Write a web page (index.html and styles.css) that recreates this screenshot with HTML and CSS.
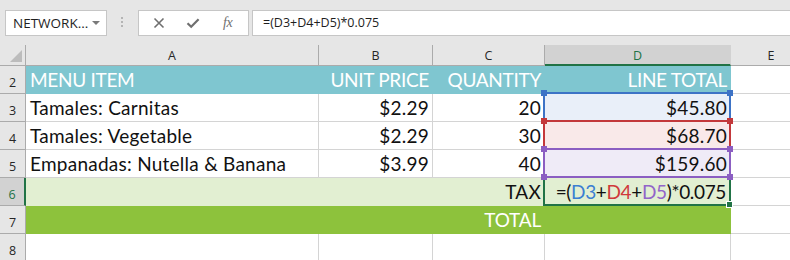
FILE: index.html
```html
<!DOCTYPE html>
<html>
<head>
<meta charset="utf-8">
<link rel="stylesheet" href="styles.css">
</head>
<body>
<div class="toolbar">
  <div class="namebox"><span class="nb-text">NETWORK...</span><span class="caret"></span></div>
  <div class="grip"><i></i><i></i><i></i></div>
  <div class="fbtns">
    <svg class="ico-x" width="12" height="12" viewBox="0 0 12 12"><path d="M1.5 1.5 L10.5 10.5 M10.5 1.5 L1.5 10.5" stroke="#6f6f6f" stroke-width="1.6" fill="none"/></svg>
    <svg class="ico-check" width="14" height="12" viewBox="0 0 14 12"><path d="M1.5 6.2 L5.2 9.8 L12.6 2.2" stroke="#6f6f6f" stroke-width="2.2" fill="none"/></svg>
    <span class="fx">fx</span>
  </div>
  <div class="fbar">=(D3+D4+D5)*0.075</div>
</div>
<div class="sheet">
  <div class="ch corner"><span class="tri"></span></div>
  <div class="ch">A</div>
  <div class="ch">B</div>
  <div class="ch">C</div>
  <div class="ch ch-active">D</div>
  <div class="ch ch-last">E</div>

  <div class="rh">2</div>
  <div class="c teal"><span>MENU ITEM</span></div>
  <div class="c teal r"><span>UNIT PRICE</span></div>
  <div class="c teal r"><span>QUANTITY</span></div>
  <div class="c teal r"><span>LINE TOTAL</span></div>
  <div class="c"></div>

  <div class="rh">3</div>
  <div class="c"><span>Tamales: Carnitas</span></div>
  <div class="c r"><span>$2.29</span></div>
  <div class="c r"><span>20</span></div>
  <div class="c r fill-blue"><span>$45.80</span><div class="rng rng-blue"><b class="tl"></b><b class="tr"></b><b class="bl"></b><b class="br"></b></div></div>
  <div class="c"></div>

  <div class="rh">4</div>
  <div class="c"><span>Tamales: Vegetable</span></div>
  <div class="c r"><span>$2.29</span></div>
  <div class="c r"><span>30</span></div>
  <div class="c r fill-red"><span>$68.70</span><div class="rng rng-red"><b class="tl"></b><b class="tr"></b><b class="bl"></b><b class="br"></b></div></div>
  <div class="c"></div>

  <div class="rh">5</div>
  <div class="c"><span>Empanadas: Nutella &amp; Banana</span></div>
  <div class="c r"><span>$3.99</span></div>
  <div class="c r"><span>40</span></div>
  <div class="c r fill-purple"><span>$159.60</span><div class="rng rng-purple"><b class="tl"></b><b class="tr"></b><b class="bl"></b><b class="br"></b></div></div>
  <div class="c"></div>

  <div class="rh rh-active">6</div>
  <div class="c lgreen"></div>
  <div class="c lgreen"></div>
  <div class="c lgreen r"><span>TAX</span></div>
  <div class="c lgreen r"><span class="formula">=(<em class="fb">D3</em>+<em class="fr">D4</em>+<em class="fp">D5</em>)*0.075</span><div class="active"><b class="handle"></b></div></div>
  <div class="c"></div>

  <div class="rh">7</div>
  <div class="c green"></div>
  <div class="c green"></div>
  <div class="c green r white"><span>TOTAL</span></div>
  <div class="c green"></div>
  <div class="c"></div>

  <div class="rh">8</div>
  <div class="c"></div>
  <div class="c"></div>
  <div class="c"></div>
  <div class="c"></div>
  <div class="c"></div>
</div>
</body>
</html>
```
FILE: styles.css
```css
html, body {
  margin: 0;
  padding: 0;
  background: #ffffff;
}
body {
  width: 790px;
  height: 260px;
  overflow: hidden;
  font-family: "Lato", "Liberation Sans", sans-serif;
}

/* toolbar */
.toolbar {
  height: 45px;
  background: #e6e6e6;
  display: flex;
  align-items: flex-start;
  padding: 10px 0 0 5px;
  box-sizing: border-box;
  font-family: "Open Sans", "Noto Sans", sans-serif;
}
.namebox {
  width: 102px;
  height: 26px;
  box-sizing: border-box;
  background: #fff;
  border: 1px solid #c6c6c6;
  display: flex;
  align-items: center;
  padding-left: 7px;
  font-size: 13.5px;
  color: #1e1e1e;
}
.nb-text { flex: 1; }
.caret {
  width: 0;
  height: 0;
  border-left: 4px solid transparent;
  border-right: 4px solid transparent;
  border-top: 4px solid #7a7a7a;
  margin-right: 6px;
}
.grip {
  width: 3px;
  margin-left: 14px;
  padding-top: 7px;
  display: flex;
  flex-direction: column;
  gap: 2px;
}
.grip i {
  display: block;
  width: 2px;
  height: 2px;
  background: #b4b4b4;
}
.fbtns {
  margin-left: 14px;
  width: 111px;
  height: 26px;
  box-sizing: border-box;
  background: #fff;
  border: 1px solid #c6c6c6;
  display: flex;
  align-items: center;
}
.ico-x { margin-left: 14px; }
.ico-check { margin-left: 21px; }
.fx {
  margin-left: 23px;
  font-family: "Liberation Serif", serif;
  font-style: italic;
  font-size: 14px;
  color: #6f6f6f;
  letter-spacing: -0.5px;
}
.fbar {
  margin-left: 3px;
  flex: 1;
  height: 26px;
  box-sizing: border-box;
  background: #fff;
  border: 1px solid #c6c6c6;
  border-right: none;
  padding-left: 10px;
  font-size: 12.5px;
  line-height: 23px;
  color: #1e1e1e;
}

/* sheet */
.sheet {
  display: grid;
  grid-template-columns: 26px 293px 114px 112px 186px 80px;
  grid-template-rows: 21px repeat(7, 28px);
}
.ch {
  background: #e6e6e6;
  border-right: 1px solid #ababab;
  border-bottom: 1px solid #ababab;
  box-sizing: border-box;
  display: flex;
  align-items: center;
  justify-content: center;
  font-family: "Open Sans", "Noto Sans", sans-serif;
  font-size: 12.5px;
  color: #262626;
  padding-top: 1px;
}
.ch-last { border-right: none; }
.corner { position: relative; }
.tri {
  position: absolute;
  right: 3px;
  bottom: 3px;
  width: 0;
  height: 0;
  border-left: 12px solid transparent;
  border-bottom: 12px solid #bcbcbc;
}
.ch-active {
  background: #d2d2d2;
  color: #217346;
  border-bottom: 2px solid #217346;
  border-right-color: #d2d2d2;
}
.rh {
  background: #e6e6e6;
  border-right: 1px solid #ababab;
  border-bottom: 1px solid #ababab;
  box-sizing: border-box;
  display: flex;
  align-items: flex-end;
  justify-content: center;
  padding-bottom: 2px;
  font-family: "Open Sans", "Noto Sans", sans-serif;
  font-size: 12.5px;
  color: #262626;
}
.rh-active {
  background: #d2d2d2;
  color: #217346;
  border-right: 2px solid #217346;
}
.c {
  position: relative;
  box-sizing: border-box;
  border-right: 1px solid #d4d4d4;
  border-bottom: 1px solid #d4d4d4;
  display: flex;
  align-items: flex-end;
  padding: 0 3px 1px 4px;
  font-size: 19px;
  letter-spacing: 0.25px;
  line-height: 24px;
  color: #111;
  white-space: nowrap;
}
.c.r { justify-content: flex-end; }
.teal {
  background: #7fc6d0;
  border-color: #7fc6d0;
  color: #ffffff;
  letter-spacing: -0.3px;
}
.lgreen {
  background: #e2efd2;
  border-color: #e2efd2;
}
.green {
  background: #8dc23c;
  border-color: #8dc23c;
}
.white { color: #ffffff; letter-spacing: -0.2px; }
.fill-blue { background: #e9eff9; }
.fill-red { background: #f9e9e9; }
.fill-purple { background: #efebf7; }

.formula { padding-right: 1px; letter-spacing: -0.35px; }
.formula em { font-style: normal; }
.fb { color: #3c7fd2; }
.fr { color: #d0393b; }
.fp { color: #9265c9; }

/* range overlays */
.rng {
  position: absolute;
  left: -2px;
  top: -2px;
  right: -1px;
  bottom: -1px;
  border: 2px solid;
  z-index: 2;
}
.rng b {
  position: absolute;
  width: 6px;
  height: 6px;
  background: inherit;
}
.rng .tl { left: -4px; top: -4px; }
.rng .tr { right: -4px; top: -4px; }
.rng .bl { left: -4px; bottom: -4px; }
.rng .br { right: -4px; bottom: -4px; }
.rng-blue { border-color: #3d73c6; }
.rng-blue b { background: #3d73c6; }
.rng-red { border-color: #c3383b; }
.rng-red b { background: #c3383b; }
.rng-purple { border-color: #8b5ec2; }
.rng-purple b { background: #8b5ec2; }

.active {
  position: absolute;
  left: -2px;
  top: -2px;
  right: -1px;
  bottom: -1px;
  border: 2px solid #217346;
  z-index: 1;
}
.handle {
  position: absolute;
  right: -4px;
  bottom: -4px;
  width: 5px;
  height: 5px;
  background: #217346;
  border: 1px solid #fff;
}
```
